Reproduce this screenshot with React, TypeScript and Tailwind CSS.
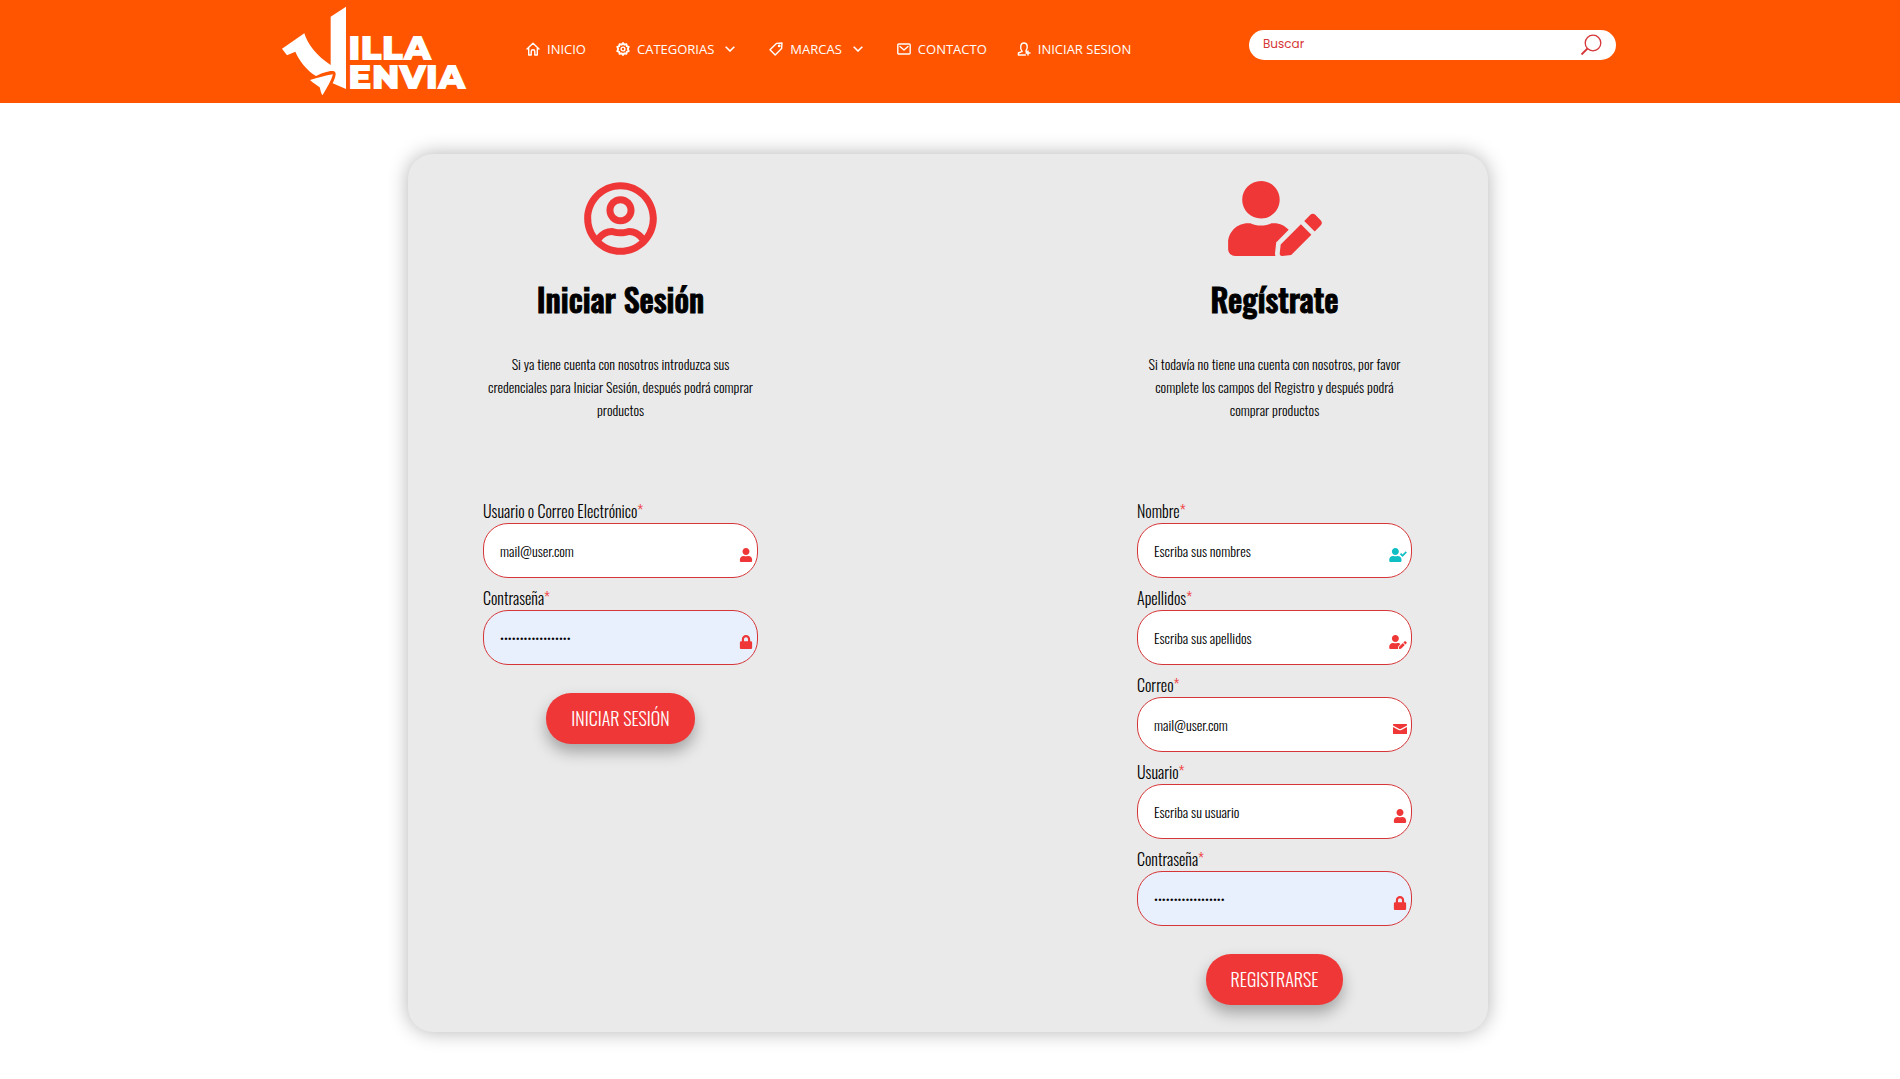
import type { ReactNode } from 'react';
import { FaLock, FaRegUserCircle, FaUser, FaUserCheck, FaUserEdit } from 'react-icons/fa';

type FieldProps = {
  id: string;
  label: string;
  icon: ReactNode;
  type?: string;
  placeholder?: string;
  defaultValue?: string;
};

type PanelProps = {
  icon: ReactNode;
  title: string;
  description: string;
  submitLabel: string;
  children: ReactNode;
};

function Logo() {
  return (
    <svg viewBox="0 0 630 309" className="h-[103px] w-[210px]" role="img" aria-label="Villa Envia">
      <path
        fill="#fff"
        d="M182 50L228 20V267L188 250C192 240 197 230 197 221C196 212 186 213 178 214C162 217 148 223 138 228C108 210 88 182 76 155L51 166L36 146L103 100C112 132 142 170 182 195Z"
      />
      <path fill="#fff" d="M120 240C144 234 166 226 189 223C184 242 172 262 158 285C154 285 152 272 149 262C141 255 130 250 120 240Z" />
      <text fill="#fff" className="font-['Montserrat','DejaVu_Sans',sans-serif] text-[104px] font-black">
        <tspan x="235" y="179">ILLA</tspan>
        <tspan x="235" y="266">ENVIA</tspan>
      </text>
    </svg>
  );
}

function NavIcon({ children }: { children: ReactNode }) {
  return (
    <svg
      viewBox="0 0 14 14"
      className="size-[14px]"
      fill="none"
      stroke="currentColor"
      strokeWidth="1.4"
      strokeLinejoin="round"
      strokeLinecap="round"
      aria-hidden="true"
    >
      {children}
    </svg>
  );
}

function Chevron() {
  return (
    <svg viewBox="0 0 10 6" className="ml-1 h-[6px] w-[10px]" fill="none" stroke="currentColor" strokeWidth="1.6" aria-hidden="true">
      <path d="M.7.7L5 5L9.3.7" />
    </svg>
  );
}

function EnvelopeIcon() {
  return (
    <svg viewBox="0 0 14 14" className="size-[14px]" fill="currentColor" aria-hidden="true">
      <path d="M.6 2H13.4Q14 2 14 2.6V3.6L8 6.7Q7 7.2 6 6.7L0 3.6V2.6Q0 2 .6 2Z" />
      <path d="M0 5L5.6 7.9Q7 8.5 8.4 7.9L14 5V11.4Q14 12 13.4 12H.6Q0 12 0 11.4Z" />
    </svg>
  );
}

const navItems = [
  {
    label: 'INICIO',
    icon: <path d="M1 7L7 1.2L13 7M2.7 6V13H5.2V9.5Q5.2 7.8 7 7.8Q8.8 7.8 8.8 9.5V13H11.3V6" />,
  },
  {
    label: 'CATEGORIAS',
    dropdown: true,
    icon: (
      <>
        <path
          strokeWidth="1.9"
          d="M7 1.1L8.3 2.7L10.4 2.1L10.8 4.2L12.7 4.9L11.8 7L12.7 9.1L10.8 9.8L10.4 11.9L8.3 11.3L7 12.9L5.7 11.3L3.6 11.9L3.2 9.8L1.3 9.1L2.2 7L1.3 4.9L3.2 4.2L3.6 2.1L5.7 2.7Z"
        />
        <circle cx="7" cy="7" r="1.9" />
      </>
    ),
  },
  {
    label: 'MARCAS',
    dropdown: true,
    icon: (
      <>
        <path d="M1 7.8L7.4 1.4L13 1L12.6 6.6L6.2 13Z" />
        <circle cx="10.2" cy="3.9" r=".7" />
      </>
    ),
  },
  {
    label: 'CONTACTO',
    icon: (
      <>
        <rect x=".8" y="2" width="12.4" height="10" rx="1" />
        <path d="M3 4.5L7 8L11 4.5" />
      </>
    ),
  },
  {
    label: 'INICIAR SESION',
    icon: <path d="M5.2 9.4C2.4 6 3.6 1 7 1C10.4 1 11.4 5.6 8.9 9M5.2 9.4L1.4 11V13H8.4M8.9 9L9.6 9.8M11 9V13M9 11H13" />,
  },
];

function Header() {
  return (
    <header className="bg-[#ff5500]">
      <div className="mx-auto flex h-[103px] max-w-[1360px] items-start justify-between">
        <div className="flex">
          <a href="#">
            <Logo />
          </a>
          <nav className="mt-[39px] ml-[46px]" aria-label="Principal">
            <ul className="flex gap-[30px] font-['Open_Sans','Noto_Sans',sans-serif] text-[13px] leading-5 font-medium text-white">
              {navItems.map(item => (
                <li key={item.label}>
                  <a href="#" className={item.dropdown ? 'flex items-center gap-[7px] pr-1' : 'flex items-center gap-[7px]'}>
                    <NavIcon>{item.icon}</NavIcon>
                    {item.label}
                    {item.dropdown && <Chevron />}
                  </a>
                </li>
              ))}
            </ul>
          </nav>
        </div>
        <form role="search" className="mt-[30px] mr-[14px] flex h-[30px] w-[367px] items-center rounded-full bg-white pr-[14px] pl-[14px]">
          <input
            type="search"
            aria-label="Buscar"
            placeholder="Buscar"
            className="min-w-0 flex-1 bg-transparent pb-[2px] font-['Poppins','Inter',sans-serif] text-[12px] text-[#d63638] outline-none placeholder:text-[#d63638]"
          />
          <button type="submit" aria-label="Buscar productos" className="text-[#d63638]">
            <svg viewBox="0 0 22 22" className="size-[22px]" fill="none" stroke="currentColor" strokeWidth="1.3" aria-hidden="true">
              <circle cx="13" cy="9" r="7.8" />
              <path d="M7.5 14.5L1.5 20.5" strokeWidth="1.8" />
            </svg>
          </button>
        </form>
      </div>
    </header>
  );
}

function Field({ id, label, icon, type = 'text', placeholder, defaultValue }: FieldProps) {
  return (
    <div className="mb-2">
      <label htmlFor={id} className="block text-[16px] leading-6">
        {label}
        <span className="text-[#ef3737]">*</span>
      </label>
      <div className="relative">
        <input
          id={id}
          type={type}
          placeholder={placeholder}
          defaultValue={defaultValue}
          className={`block h-[55px] w-full rounded-[25px] border border-[#d63638] pr-8 pl-4 outline-none placeholder:text-black ${
            type === 'password' ? 'bg-[#e8f0fe] text-[13px]' : 'bg-white text-[14px]'
          }`}
        />
        <span className="absolute right-[5px] bottom-[16px] text-[14px] text-[#ef3737]">{icon}</span>
      </div>
    </div>
  );
}

function Panel({ icon, title, description, submitLabel, children }: PanelProps) {
  return (
    <form className="w-[275px]">
      <div className="flex justify-center text-[75px] text-[#ef3737]">{icon}</div>
      <h2 className="mt-[19px] text-center text-[32px] leading-[48px] font-medium [-webkit-text-stroke:1px_black]">{title}</h2>
      <p className="mt-[29px] mb-[78px] text-center text-[14px] leading-[23px]">{description}</p>
      {children}
      <div className="mt-[28px] flex justify-center">
        <button
          type="submit"
          className="h-[51px] rounded-[25px] bg-[#ef3737] px-[25px] text-[18px] text-white shadow-[0_8px_15px_rgba(0,0,0,0.3)]"
        >
          {submitLabel}
        </button>
      </div>
    </form>
  );
}

export default function App() {
  return (
    <div className="bg-white text-black">
      <Header />
      <main className="pt-[51px] pr-1 pb-[46px] font-['Oswald','Liberation_Sans',sans-serif] font-light">
        <div className="mx-auto flex max-w-[1080px] items-start justify-between rounded-[25px] bg-[#eaeaea] pt-[27px] pr-[76px] pb-[27px] pl-[75px] shadow-[0_0_20px_rgba(0,0,0,0.3)]">
          <Panel
            icon={<FaRegUserCircle />}
            title="Iniciar Sesión"
            description="Si ya tiene cuenta con nosotros introduzca sus credenciales para Iniciar Sesión, después podrá comprar productos"
            submitLabel="INICIAR SESIÓN"
          >
            <Field id="login-user" label="Usuario o Correo Electrónico" placeholder="mail@user.com" icon={<FaUser />} />
            <Field id="login-password" label="Contraseña" type="password" defaultValue="contrasena-segura1" icon={<FaLock />} />
          </Panel>
          <Panel
            icon={<FaUserEdit className="w-[94px]" />}
            title="Regístrate"
            description="Si todavía no tiene una cuenta con nosotros, por favor complete los campos del Registro y después podrá comprar productos"
            submitLabel="REGISTRARSE"
          >
            <Field
              id="first-name"
              label="Nombre"
              placeholder="Escriba sus nombres"
              icon={<FaUserCheck className="w-[18px] text-[#0fbfc4]" />}
            />
            <Field id="last-name" label="Apellidos" placeholder="Escriba sus apellidos" icon={<FaUserEdit className="w-[18px]" />} />
            <Field id="email" label="Correo" type="email" placeholder="mail@user.com" icon={<EnvelopeIcon />} />
            <Field id="username" label="Usuario" placeholder="Escriba su usuario" icon={<FaUser />} />
            <Field id="password" label="Contraseña" type="password" defaultValue="contrasena-segura1" icon={<FaLock />} />
          </Panel>
        </div>
      </main>
    </div>
  );
}
